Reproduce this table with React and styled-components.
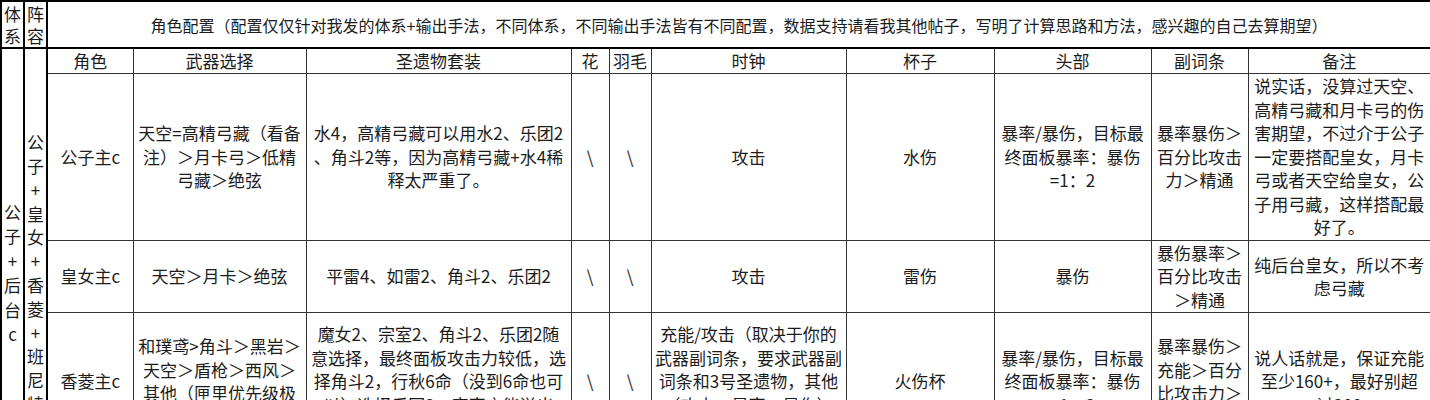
import React from "react";
import styled, { createGlobalStyle } from "styled-components";

const GlobalStyle = createGlobalStyle`
  body {
    margin: 0;
    background: #fff;
    font-family: "Noto Sans CJK SC", "Noto Sans", sans-serif;
  }
`;

const widths = [23, 23, 86, 173, 265, 38, 42, 195, 148, 157, 97, 183];

const title =
  "角色配置（配置仅仅针对我发的体系+输出手法，不同体系，不同输出手法皆有不同配置，数据支持请看我其他帖子，写明了计算思路和方法，感兴趣的自己去算期望）";

const heads = ["角色", "武器选择", "圣遗物套装", "花", "羽毛", "时钟", "杯子", "头部", "副词条", "备注"];

const rows = [
  {
    h: 167,
    role: ["公子主c"],
    weapon: ["天空=高精弓藏（看备", "注）＞月卡弓＞低精", "弓藏＞绝弦"],
    set: ["水4，高精弓藏可以用水2、乐团2", "、角斗2等，因为高精弓藏+水4稀", "释太严重了。"],
    flower: ["\\"],
    feather: ["\\"],
    clock: ["攻击"],
    cup: ["水伤"],
    head: ["暴率/暴伤，目标最", "终面板暴率：暴伤", "=1：2"],
    sub: ["暴率暴伤＞", "百分比攻击", "力＞精通"],
    note: [
      "说实话，没算过天空、",
      "高精弓藏和月卡弓的伤",
      "害期望，不过介于公子",
      "一定要搭配皇女，月卡",
      "弓或者天空给皇女，公",
      "子用弓藏，这样搭配最",
      "好了。",
    ],
  },
  {
    h: 72,
    role: ["皇女主c"],
    weapon: ["天空＞月卡＞绝弦"],
    set: ["平雷4、如雷2、角斗2、乐团2"],
    flower: ["\\"],
    feather: ["\\"],
    clock: ["攻击"],
    cup: ["雷伤"],
    head: ["暴伤"],
    sub: ["暴伤暴率＞", "百分比攻击", "＞精通"],
    note: ["纯后台皇女，所以不考", "虑弓藏"],
  },
  {
    h: 138,
    role: ["香菱主c"],
    weapon: ["和璞鸢>角斗＞黑岩＞", "天空＞盾枪＞西风＞", "其他（匣里优先级极", "低）"],
    set: [
      "魔女2、宗室2、角斗2、乐团2随",
      "意选择，最终面板攻击力较低，选",
      "择角斗2，行秋6命（没到6命也可",
      "以）选择乐团2，宗室充能溢出",
      "就选魔女2",
    ],
    flower: ["\\"],
    feather: ["\\"],
    clock: [
      "充能/攻击（取决于你的",
      "武器副词条，要求武器副",
      "词条和3号圣遗物，其他",
      "（攻击、暴率、暴伤）",
      "满足两条即可）",
    ],
    cup: ["火伤杯"],
    head: ["暴率/暴伤，目标最", "终面板暴率：暴伤", "=1：2"],
    sub: ["暴率暴伤＞", "充能＞百分", "比攻击力＞", "精通"],
    note: ["说人话就是，保证充能", "至少160+，最好别超", "过200"],
  },
  {
    h: 48,
    role: ["班尼特主c"],
    weapon: ["天空之刃＞风鹰剑"],
    set: ["宗室4"],
    flower: ["\\"],
    feather: ["\\"],
    clock: ["充能/生命"],
    cup: ["生命"],
    head: ["治疗加成"],
    sub: ["充能＞生命"],
    note: ["充能拉满，保证大招"],
  },
];

const keys = ["role", "weapon", "set", "flower", "feather", "clock", "cup", "head", "sub", "note"];

export default function App() {
  return (
    <>
      <GlobalStyle />
      <Sheet>
        <colgroup>
          {widths.map((w, i) => (
            <Col key={i} $w={w} />
          ))}
        </colgroup>
        <tbody>
          <Row $h={47}>
            <StackCell $lh={22} $top>
              <Stack text="体系" />
            </StackCell>
            <StackCell $lh={22} $top>
              <Stack text="阵容" />
            </StackCell>
            <TitleCell colSpan={10}>{title}</TitleCell>
          </Row>
          <Row $h={25}>
            <StackCell rowSpan={5} $lh={24.5}>
              <Stack text="公子+后台c" />
            </StackCell>
            <StackCell rowSpan={5} $lh={23.8}>
              <Stack text="公子+皇女+香菱+班尼特" />
            </StackCell>
            {heads.map((h) => (
              <HeadCell key={h}>{h}</HeadCell>
            ))}
          </Row>
          {rows.map((r, i) => (
            <Row key={i} $h={r.h}>
              {keys.map((k) => (
                <Cell key={k}>
                  {r[k].map((line, j) => (
                    <Line key={j}>{line}</Line>
                  ))}
                </Cell>
              ))}
            </Row>
          ))}
        </tbody>
      </Sheet>
    </>
  );
}

function Stack({ text }) {
  return Array.from(text).map((ch, i) => <Line key={i}>{ch}</Line>);
}

const Sheet = styled.table`
  border-collapse: collapse;
  table-layout: fixed;
  width: 1430px;
  border: 2px solid #000;
  font-size: 17px;
  color: #1c1c1c;
`;

const Col = styled.col`
  width: ${(p) => p.$w}px;
`;

const Row = styled.tr`
  height: ${(p) => p.$h}px;
`;

const Cell = styled.td`
  border: 1px solid #333;
  padding: 0 2px;
  text-align: center;
  vertical-align: middle;
  line-height: 23.5px;
  white-space: nowrap;
`;

const HeadCell = styled(Cell)`
  line-height: 22px;
`;

const TitleCell = styled(Cell)`
  border-bottom: 2px solid #000;
  font-size: 16px;
  line-height: 22px;
`;

const StackCell = styled(Cell)`
  padding: 0;
  border-right: 2px solid #000;
  line-height: ${(p) => p.$lh}px;
  ${(p) => p.$top && "border-bottom: 2px solid #000;"}
`;

const Line = styled.span`
  display: block;
`;
